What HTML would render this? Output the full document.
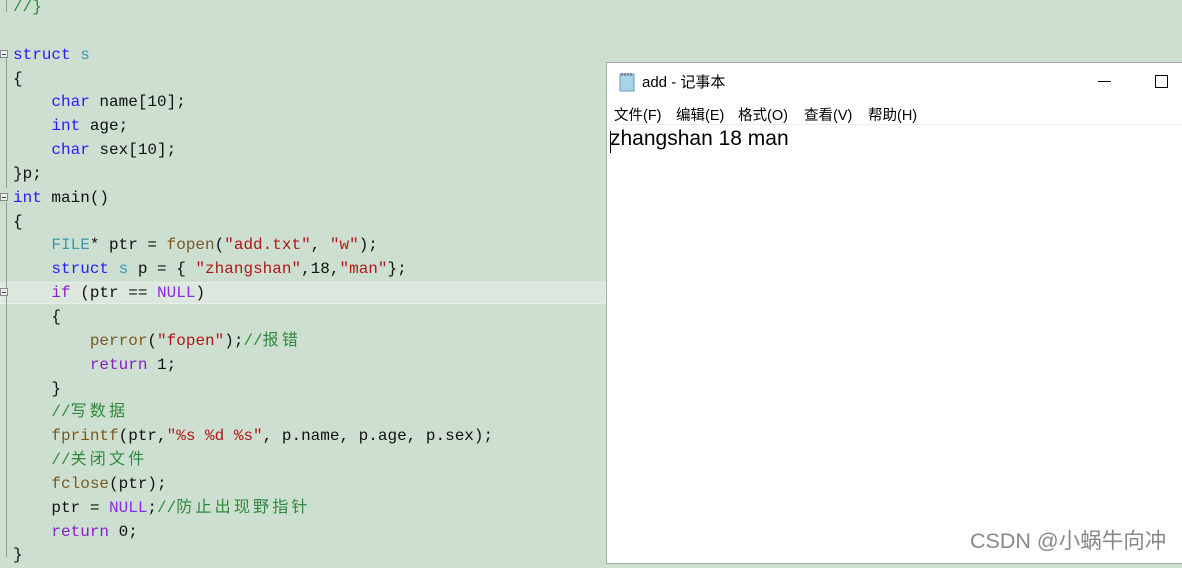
<!DOCTYPE html>
<html><head><meta charset="utf-8"><style>
body{margin:0;width:1182px;height:557px;overflow:hidden;background:#cddfd0;position:relative;font-family:"Liberation Mono","Noto Sans CJK SC",monospace}
.code{position:absolute;left:13px;top:-4px;font-size:16px;line-height:23.85px;white-space:pre;color:#111}
.k{color:#2a1aff}.t{color:#3a9ab0}.p{color:#8a1ec8}.s{color:#b01818}.f{color:#7a5a20}.c{color:#2e8a3a}.m{color:#8a2be2}.v{color:#222266}
.z{letter-spacing:3.2px}
.cur{position:absolute;left:0;top:282px;width:606px;height:22px;background:#dce8de;border:1px solid #e8efe9;box-sizing:border-box}
.g{position:absolute;left:6px;width:1px;background:#999}
.box{position:absolute;left:0;width:8px;height:8px;border:1px solid #888;box-sizing:border-box;background:#eee}
.box:after{content:"";position:absolute;left:1px;top:3px;width:4px;height:1px;background:#444}
.win{position:absolute;left:606px;top:62px;width:580px;height:500px;background:#fff;border:1px solid #aaa;font-family:"Liberation Sans","Noto Sans CJK SC",sans-serif}
.title{position:absolute;left:35px;top:8px;font-size:15px;color:#000}
.menu{position:absolute;top:41px;font-size:14.5px;color:#000}
.sep{position:absolute;left:0;right:0;top:61px;height:1px;background:#eee}
.txt{position:absolute;left:3px;top:64px;font-size:21px;color:#000}
.wm{position:absolute;left:970px;top:524px;font-size:21.5px;color:#888;font-family:"Liberation Sans","Noto Sans CJK SC",sans-serif}
</style></head><body>
<div class="cur"></div>
<div class="g" style="top:0;height:12px"></div>
<div class="g" style="top:58px;height:130px"></div>
<div class="g" style="top:202px;height:355px"></div>
<div class="box" style="top:50px"></div>
<div class="box" style="top:193px"></div>
<div class="box" style="top:288px"></div>
<div class="code"><span class="c">//}</span>

<span class="k">struct</span> <span class="t">s</span>
{
    <span class="k">char</span> name[10];
    <span class="k">int</span> age;
    <span class="k">char</span> sex[10];
}p;
<span class="k">int</span> main()
{
    <span class="t">FILE</span>* ptr = <span class="f">fopen</span>(<span class="s">"add.txt"</span>, <span class="s">"w"</span>);
    <span class="k">struct</span> <span class="t">s</span> p = { <span class="s">"zhangshan"</span>,18,<span class="s">"man"</span>};
    <span class="p">if</span> (ptr == <span class="m">NULL</span>)
    {
        <span class="f">perror</span>(<span class="s">"fopen"</span>);<span class="c">//<span class="z">报错</span></span>
        <span class="p">return</span> 1;
    }
    <span class="c">//<span class="z">写数据</span></span>
    <span class="f">fprintf</span>(ptr,<span class="s">"%s %d %s"</span>, p.name, p.age, p.sex);
    <span class="c">//<span class="z">关闭文件</span></span>
    <span class="f">fclose</span>(ptr);
    ptr = <span class="m">NULL</span>;<span class="c">//<span class="z">防止出现野指针</span></span>
    <span class="p">return</span> 0;
}</div>
<div class="win">
<svg style="position:absolute;left:11px;top:9px" width="18" height="20"><rect x="2" y="2" width="14" height="17" fill="#a8d4e8" stroke="#6a9ab0"/><path d="M4 1v3M7 1v3M10 1v3M13 1v3" stroke="#556"/></svg>
<div class="title">add - 记事本</div>
<div style="position:absolute;left:491px;top:18px;width:13px;height:1px;background:#000"></div>
<div style="position:absolute;left:548px;top:12px;width:11px;height:11px;border:1px solid #000"></div>
<div class="menu" style="left:7px">文件(F)</div>
<div class="menu" style="left:69px">编辑(E)</div>
<div class="menu" style="left:131px">格式(O)</div>
<div class="menu" style="left:197px">查看(V)</div>
<div class="menu" style="left:261px">帮助(H)</div>
<div class="sep"></div>
<div style="position:absolute;left:3px;top:68px;width:1px;height:22px;background:#000"></div>
<div class="txt">zhangshan 18 man</div>
</div>
<div class="wm">CSDN @小蜗牛向冲</div>
</body></html>
